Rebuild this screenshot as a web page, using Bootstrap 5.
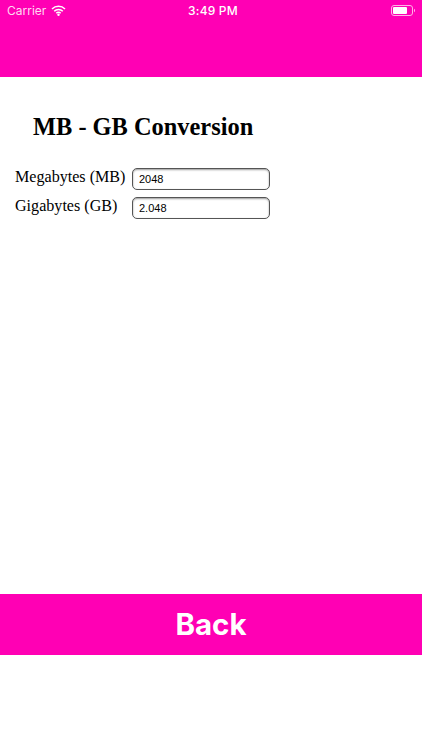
<!DOCTYPE html>
<html lang="en">
<head>
<meta charset="utf-8">
<title>MB - GB Conversion</title>
<link href="https://cdn.jsdelivr.net/npm/bootstrap@5.3.0/dist/css/bootstrap.min.css" rel="stylesheet">
<style>
html,body{height:750px;overflow:hidden;background:#fff}
.app-top{background:#ff00b4;height:77px;padding:0 7px;color:#fff;font-family:Inter,"Liberation Sans",sans-serif}
.status-row{height:20px;font-size:12px;padding-top:1px}
.status-row .carrier{color:#ffd9f2;font-size:12px;margin-right:5px}
.status-col{flex:1 1 0}
.clock{font-weight:500;font-size:12px;letter-spacing:.2px;margin-left:4px}
.conv-title{font-family:"Liberation Serif",serif;font-weight:700;font-size:24.4px;line-height:28px;margin:36px 0 0 33px;color:#000}
.conv-form{margin:27px 0 0 15px;row-gap:7px}
.conv-label{font-family:"Liberation Serif",serif;font-size:16.1px;line-height:20px;color:#000;width:117px;flex:none;white-space:nowrap;margin:-1px 0 0}
.conv-input{font-family:"Liberation Sans",sans-serif;font-size:11px;line-height:16px;width:138px;height:22px;flex:none;border:1px solid #555;border-radius:5px;padding:2px 6px;color:#000;box-shadow:inset 0 1px 2px rgba(0,0,0,.4);background:#fff;outline:0}
.back-btn{display:block;width:100%;height:61px;margin-top:375px;background:#ff00b4;color:#fff;border:0;border-radius:0;font-family:Inter,"Liberation Sans",sans-serif;font-weight:700;font-size:29.5px;line-height:61px;padding:0;text-align:center}
.back-btn:hover,.back-btn:active{background:#ff00b4!important;color:#fff!important}
</style>
</head>
<body>
<div class="app-top">
  <div class="status-row d-flex align-items-center">
    <div class="status-col d-flex align-items-center">
      <span class="carrier">Carrier</span>
      <svg width="15" height="11" viewBox="0 0 15 11" aria-hidden="true"><path d="M1 4a9.2 9.2 0 0 1 13 0M3.2 6.2a6.1 6.1 0 0 1 8.6 0M5.3 8.2a3.1 3.1 0 0 1 4.4 0" fill="none" stroke="#fff" stroke-width="1.5"/><circle cx="7.5" cy="9.7" r="1.2" fill="#fff"/></svg>
    </div>
    <span class="clock">3:49 PM</span>
    <div class="status-col d-flex justify-content-end align-items-center">
      <svg width="24" height="11" viewBox="0 0 24 11" aria-hidden="true"><rect x=".5" y=".5" width="21" height="10" rx="2.5" fill="none" stroke="#ffb3e6"/><rect x="2" y="2" width="14" height="7" rx="1" fill="#fff"/><path d="M23 3.8v3.4a1.9 1.9 0 0 0 0-3.4z" fill="#ffb3e6"/></svg>
    </div>
  </div>
</div>
<h1 class="conv-title">MB - GB Conversion</h1>
<div class="conv-form d-flex flex-column">
  <div class="d-flex">
    <label class="conv-label" for="mb">Megabytes (MB)</label>
    <input class="conv-input" id="mb" type="text" value="2048">
  </div>
  <div class="d-flex">
    <label class="conv-label" for="gb">Gigabytes (GB)</label>
    <input class="conv-input" id="gb" type="text" value="2.048">
  </div>
</div>
<button class="btn back-btn" type="button">Back</button>
<script src="https://cdn.jsdelivr.net/npm/bootstrap@5.3.0/dist/js/bootstrap.bundle.min.js"></script>
</body>
</html>
